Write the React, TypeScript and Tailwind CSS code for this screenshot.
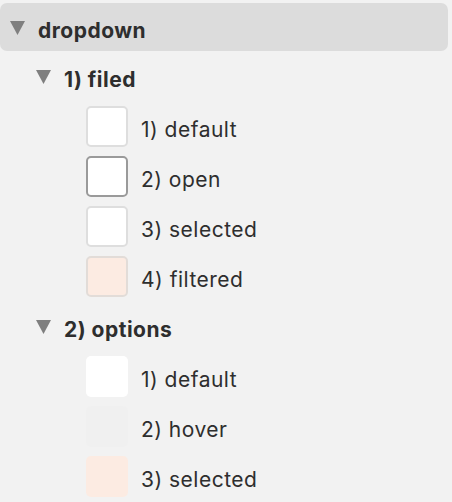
import React from "react";

type Item = { label: string; swatch: string };

const filed: Item[] = [
  { label: "1) default", swatch: "border-2 border-[#dedede] bg-white" },
  { label: "2) open", swatch: "border-2 border-[#9a9a9a] bg-white" },
  { label: "3) selected", swatch: "border-2 border-[#dedede] bg-white" },
  { label: "4) filtered", swatch: "border-2 border-[#e2dcd8] bg-[#fcebe2]" },
];

const options: Item[] = [
  { label: "1) default", swatch: "bg-white" },
  { label: "2) hover", swatch: "bg-[#f0f0f0]" },
  { label: "3) selected", swatch: "bg-[#fcebe2]" },
];

function Caret() {
  return (
    <svg viewBox="0 0 15 14" className="mt-[2px] h-[14px] w-[15px] shrink-0" fill="#7f7f7f">
      <path d="M0 0 H15 L7.5 14 Z" />
    </svg>
  );
}

function Leaf({ item }: { item: Item }) {
  return (
    <div className="flex h-[50px] items-center pl-[86px]">
      <div className={`h-[41px] w-[42px] shrink-0 rounded-[5px] ${item.swatch}`} />
      <span className="ml-[13px] pt-[7px] text-[21px] tracking-[0.5px] text-[#2e2e2e]">{item.label}</span>
    </div>
  );
}

function Group({ title, items }: { title: string; items: Item[] }) {
  return (
    <div>
      <div className="flex h-[50px] items-center gap-[13px] pl-[36px]">
        <Caret />
        <span className="pt-[7px] text-[21px] font-bold tracking-[0.5px] text-[#2e2e2e]">{title}</span>
      </div>
      {items.map((it) => (
        <Leaf key={it.label} item={it} />
      ))}
    </div>
  );
}

export default function App() {
  return (
    <div
      className="h-[502px] w-[452px] overflow-hidden bg-[#f2f2f2] pt-[3px]"
      style={{ fontFamily: "Inter, 'Noto Sans', sans-serif" }}
    >
      <div className="mr-[4px] flex h-[48px] items-center gap-[13px] rounded-[7px] bg-[#dcdcdc] pl-[10px]">
        <Caret />
        <span className="pt-[7px] text-[21px] font-bold tracking-[0.5px] text-[#2e2e2e]">dropdown</span>
      </div>
      <Group title="1) filed" items={filed} />
      <Group title="2) options" items={options} />
    </div>
  );
}
